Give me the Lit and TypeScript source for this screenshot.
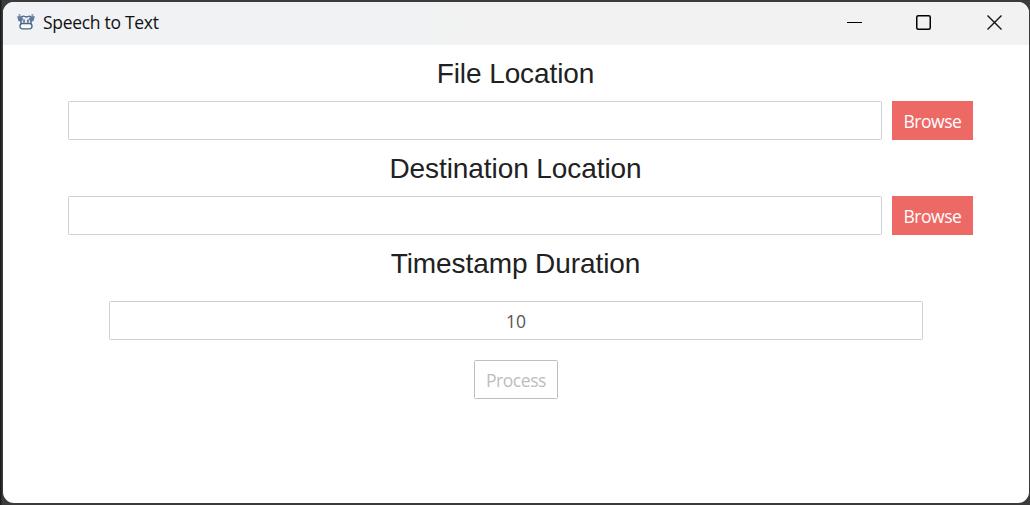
import { LitElement, html, css } from "lit";
import { customElement } from "lit/decorators.js";

@customElement("app-root")
export class AppRoot extends LitElement {
  static styles = css`
    :host {
      display: block;
      box-sizing: border-box;
      width: 1030px;
      height: 505px;
      padding: 2px 1px 2px 3px;
      overflow: hidden;
      background: linear-gradient(90deg, #1c1c1c 0, #1c1c1c 1px, #3b3b3b 2px, #3b3b3b 100%);
      font-family: "Open Sans", "Noto Sans", sans-serif;
    }
    .window {
      height: 501px;
      border-radius: 11px;
      overflow: hidden;
      background: #fff;
    }
    .titlebar {
      display: flex;
      align-items: center;
      height: 43px;
      background: linear-gradient(90deg, #f0f2f5, #f2f2f2 60%);
    }
    .logo { width: 18px; height: 18px; margin: 0 8px 3px 14px; }
    .title {
      flex: 1;
      font-size: 17.5px;
      font-weight: 400;
      line-height: 24px;
      letter-spacing: -0.3px;
      padding-bottom: 3px;
      color: #111;
    }
    .controls { display: flex; }
    .control { width: 70px; height: 41px; display: block; }
    .content { display: flex; flex-direction: column; }
    h2 {
      margin: 13px 1px 11px 0;
      font: 400 28px/32px "Liberation Sans", Arial, sans-serif;
      letter-spacing: -0.08px;
      text-align: center;
      color: #212121;
    }
    .row { display: flex; gap: 10px; padding-left: 65px; }
    input {
      box-sizing: border-box;
      width: 814px;
      height: 39px;
      padding: 0 10px;
      margin: 0;
      border: 1px solid #ced0d8;
      border-radius: 1.5px;
      background: #fff;
      outline: none;
      font: 17.5px "Open Sans", "Noto Sans", sans-serif;
      color: #555;
    }
    .duration {
      align-self: center;
      margin-top: 10px;
      text-align: center;
      border-color: #cfcfcf;
    }
    button {
      box-sizing: border-box;
      height: 39px;
      padding: 0;
      margin: 0;
      border: 0;
      font: 17.5px "Open Sans", "Noto Sans", sans-serif;
      letter-spacing: -0.45px;
      white-space: nowrap;
    }
    .browse { width: 81px; background: #ec6966; color: #fff; }
    .process {
      align-self: center;
      width: 84px;
      margin-top: 20px;
      border: 1px solid #bdbdbd;
      border-radius: 1.5px;
      background: #fff;
      color: #bdbdbd;
    }
  `;

  private picker(label: string) {
    return html`
      <h2>${label}</h2>
      <div class="row">
        <input type="text" aria-label=${label} />
        <button class="browse">Browse</button>
      </div>
    `;
  }

  render() {
    return html`
      <div class="window">
        <div class="titlebar">
          <svg class="logo" viewBox="0 0 18 18" fill="none" stroke="#4e6280" stroke-width="1.3">
            <path d="M3 8l1.500-4.500h9L15 8v3H3z" fill="#e9eff7" stroke="none" />
            <path d="M2.500 1v2l2 1M15.500 1v2l-2 1" stroke="#86a3cd" stroke-width="1.800" />
            <path d="M1 4l3 .2 1.500 1.800-1.500 2-2-.5zM17 4l-3 .2-1.500 1.800 1.500 2 2-.5z" fill="#60799d" stroke="#60799d" />
            <path d="M4.500 4q2-1.500 3.500-.5t3 0q1.500-.8 2.500.5M4 7.500v4.500M14 7.500v4.500" />
            <rect x="3" y="10.500" width="12" height="5.300" rx="2.500" fill="#f8fafc" />
            <path d="M7 6.500v3M11 6.500v3" stroke="#344962" />
          </svg>
          <div class="title">Speech to Text</div>
          <div class="controls">
            <svg class="control" viewBox="0 0 70 41" stroke="#000" fill="none">
              <path d="M28 19.500h15" />
            </svg>
            <svg class="control" viewBox="0 0 70 41" stroke="#000" fill="none">
              <rect x="27.750" y="12.750" width="13.500" height="13.500" rx="1.500" stroke-width="1.500" />
            </svg>
            <svg class="control" viewBox="0 0 70 41" stroke="#111" fill="none">
              <path d="M28.500 12.500l14 14M42.500 12.500l-14 14" stroke-width="1.400" />
            </svg>
          </div>
        </div>
        <div class="content">
          ${this.picker("File Location")}
          ${this.picker("Destination Location")}
          <h2>Timestamp Duration</h2>
          <input class="duration" type="text" aria-label="Timestamp Duration" .value=${"10"} />
          <button class="process" disabled>Process</button>
        </div>
      </div>
    `;
  }
}
